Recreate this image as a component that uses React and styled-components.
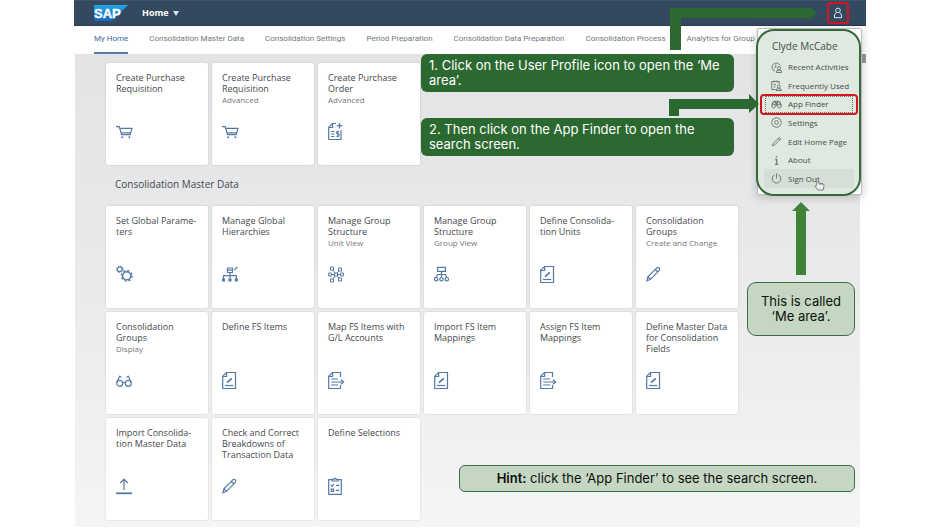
import React from "react";
import styled, { createGlobalStyle } from "styled-components";

const GlobalStyle = createGlobalStyle`
  * { box-sizing: border-box; }
  body { margin: 0; background: #fff; font-family: "Open Sans", "Noto Sans", sans-serif; color: #45494d; }
  button { font: inherit; color: inherit; border: 0; background: none; padding: 0; cursor: pointer; }
  a { color: inherit; text-decoration: none; }
`;

const Frame = styled.div`
  position: relative;
  margin: 0 74px;
`;

const Header = styled.header`
  display: flex;
  align-items: center;
  gap: 14px;
  height: 26px;
  padding: 0 17px 0 20px;
  background: #34495f;
  border-top: 1px solid #3d5670;
  border-bottom: 1px solid #2a3a4c;
`;

const HomeButton = styled.button`
  display: flex;
  align-items: center;
  gap: 4px;
  margin-right: auto;
  font-size: 9px;
  line-height: 12px;
  font-weight: 700;
  color: #fff;
`;

const UserButton = styled.button`
  display: grid;
  place-items: center;
  width: 22px;
  height: 22px;
  border: 2px solid #d3161f;
  border-radius: 4px;
  color: #dce8f4;
`;

const TabBar = styled.nav`
  display: flex;
  gap: 21px;
  height: 28px;
  padding: 0 20px;
  overflow: hidden;
  white-space: nowrap;
  background: #fff;
`;

const Tab = styled.a`
  display: flex;
  align-items: center;
  font-family: Roboto, "Open Sans", sans-serif;
  font-size: 8px;
  line-height: 12px;
  color: ${(p) => (p.$active ? "#3a6a9c" : "#74777a")};
  border-bottom: 2px solid ${(p) => (p.$active ? "#5580ad" : "transparent")};
`;

const Workspace = styled.main`
  margin: 0 6px 0 1px;
  padding: 9px 31px 7px;
  background: linear-gradient(#e2e4e5, #e7e8ea 36%, #eceef0 68%, #f4f5f6);
`;

const Tiles = styled.div`
  display: grid;
  grid-template-columns: repeat(auto-fill, 102px);
  gap: 4px;
`;

const Tile = styled.a`
  display: flex;
  flex-direction: column;
  justify-content: space-between;
  height: 102px;
  padding: 9px 4px 25px 10px;
  background: #fff;
  border-radius: 2px;
  box-shadow: 0 0 2px rgba(0, 0, 0, 0.18);
`;

const TileTitle = styled.h3`
  margin: 0;
  font-size: 9px;
  line-height: 11px;
  font-weight: 400;
  white-space: pre-line;
`;

const TileNote = styled.p`
  margin: 0;
  font-size: 8px;
  line-height: 11px;
  color: #74777a;
`;

const TileIcon = styled.svg`
  display: block;
  flex: none;
  width: 18px;
  height: 18px;
  fill: none;
  stroke: #5579a5;
  stroke-width: 1.2;
`;

const SectionTitle = styled.h2`
  margin: 0;
  padding: 11px 9px 14px;
  font-size: 10px;
  line-height: 16px;
  font-weight: 400;
`;

const ScrollThumb = styled.div`
  position: absolute;
  top: 54px;
  right: 0;
  width: 6px;
  height: 9px;
  background: #96989a;
`;

const Popover = styled.section`
  position: absolute;
  top: 28px;
  right: 4px;
  width: 105px;
  padding: 10px 7px 6px 6px;
  background: #fff;
  border: 1px solid #b9bdc0;
  border-radius: 2px;
  box-shadow: 0 2px 10px rgba(0, 0, 0, 0.22);
`;

const UserName = styled.h2`
  margin: 0 0 5px 8px;
  font-size: 10px;
  line-height: 14px;
  font-weight: 400;
`;

const Menu = styled.div`
  display: grid;
  grid-auto-rows: 1fr;
  height: 130px;
`;

const MenuItem = styled.button`
  display: flex;
  align-items: center;
  gap: 6px;
  padding-left: 7px;
  font-size: 8px;
  line-height: 12px;
  white-space: nowrap;
  background: ${(p) => (p.$hovered ? "#f3f4f4" : "transparent")};
  outline: ${(p) => (p.$focused ? "1px dotted #777" : "none")};
  outline-offset: -2px;
`;

const MenuIcon = styled.svg`
  width: 11px;
  height: 11px;
  fill: none;
  stroke: #7b8083;
  stroke-width: 1;
`;

const MeAreaRing = styled.div`
  position: absolute;
  top: 29px;
  right: 5px;
  width: 105px;
  height: 167px;
  border: 2px solid #35683a;
  border-radius: 18px;
  background: rgba(44, 106, 48, 0.15);
  pointer-events: none;
`;

const FinderRing = styled.div`
  position: absolute;
  top: 94px;
  right: 8px;
  width: 98px;
  height: 21px;
  border: 2px solid #d3161f;
  border-radius: 4px;
  pointer-events: none;
`;

const Callout = styled.p`
  position: absolute;
  top: ${(p) => p.$top}px;
  right: 132px;
  width: 313px;
  margin: 0;
  padding: 4px 8px;
  border-radius: 6px;
  background: #2c6930;
  color: #fff;
  font-family: Inter, sans-serif;
  font-size: 13px;
  line-height: 15px;
`;

const Note = styled.p`
  position: absolute;
  top: ${(p) => p.$top}px;
  right: 11px;
  width: ${(p) => p.$width}px;
  margin: 0;
  padding: ${(p) => p.$pad}px 8px;
  border: 1px solid #3f6c48;
  border-radius: ${(p) => p.$radius}px;
  background: #c5d7c3;
  color: #0c0f0c;
  text-align: center;
  font-family: Inter, sans-serif;
  font-size: 13px;
  line-height: 15px;

  strong { font-weight: 600; }
`;

const Arrow = styled.svg`
  position: absolute;
  top: ${(p) => p.$top}px;
  right: ${(p) => p.$right}px;
  fill: ${(p) => p.$color || "#2c6930"};
`;

const Pointer = styled.svg`
  position: absolute;
  top: 178px;
  right: 41px;
  fill: #edf1ed;
  stroke: #7b8083;
`;

const SheetOutline = () => <path d="M4.5 1.5H13.5V17.5H.7V5.3ZM.7 5.5H4.6V1.5" />;

const drawings = {
  cart: (
    <>
      <path d="M0 4.7H3.2L5.6 12.7H14.2L16 6.3H3.8M4.8 10.8H14.6" />
      <circle cx="6.2" cy="15.2" r="1" fill="#5579a5" stroke="none" />
      <circle cx="13.4" cy="15.2" r="1" fill="#5579a5" stroke="none" />
    </>
  ),
  order: (
    <>
      <path d="M8 1.5H4.5L.7 5.3V17.5H13V8M.7 5.5H4.6V1.5M11.5 1V6.5M8.8 3.7H14.4" />
      <path d="M3 9.5H6.5M3 12H6.5M3 14.5H6.5M11 9.6H8.6V11.8H11V14.3H8.4M9.8 8.6V15.4" strokeWidth="1" />
    </>
  ),
  gears: (
    <>
      <circle cx="3.8" cy="4.3" r="2.4" />
      <circle cx="3.8" cy="4.3" r="3.3" strokeWidth="1" strokeDasharray="1.2 1.4" />
      <circle cx="10.7" cy="10.8" r="4.1" strokeWidth="1.4" />
      <circle cx="10.7" cy="10.8" r="5.3" strokeWidth="1.5" strokeDasharray="2 2.16" />
    </>
  ),
  hierarchyEdit: (
    <>
      <path d="M5.5 3H10.5V7.5H5.5ZM5.5 5.2H10.5M8 7.5V14M1.5 14V10.7H14.3V14M12.2 5.2L15.4 2" />
      <path d="M0 13.4H3V16.5H0ZM6.5 13.4H9.5V16.5H6.5ZM12.8 13.4H15.8V16.5H12.8Z" fill="#5579a5" stroke="none" />
    </>
  ),
  network: (
    <path
      d="M2.5 2H5.5V5H2.5ZM10.5 3H13.5V6H10.5ZM.7 8H3.3V11H.7ZM6.5 8H9.5V11H6.5ZM12.7 8H15.4V11H12.7ZM2.5 14H5.5V17H2.5ZM10.5 13H13.5V16H10.5ZM3.3 9.5H6.5M9.5 9.5H12.7M5 5L7 8M11 6L9 8M5 14L7 11M11 13L9 11"
      strokeWidth="1"
    />
  ),
  hierarchy: (
    <>
      <path d="M3.6 2.3H11.4V6.3H3.6ZM7.5 6.3V12M2.3 12.5L3.5 9.5H11.5L12.7 12.5" />
      <circle cx="2.2" cy="14.2" r="1.7" />
      <circle cx="7.5" cy="14.2" r="1.7" />
      <circle cx="12.8" cy="14.2" r="1.7" />
    </>
  ),
  sheet: (
    <>
      <SheetOutline />
      <path d="M3 14.5H11.3" />
      <path d="M5 11.6L9.8 7.4" strokeWidth="1.7" />
    </>
  ),
  pencil: <path d="M.9 15.8L1.9 11.8L11 2.7Q12.3 1.9 13.3 2.9Q14.2 4 13.4 5.3L4.5 14.3ZM9.3 4.5L11.8 7M1.9 11.8L4.5 14.3" />,
  sheetExport: (
    <>
      <path d="M12.5 6V1.5H4.5L.7 5.3V17.5H12.5V14M.7 5.5H4.6V1.5" />
      <path d="M3.2 8H10M3.2 11H14.5M3.2 14H10M13 8.7L15.6 11L13 13.3" />
    </>
  ),
  glasses: (
    <>
      <circle cx="3.7" cy="12.3" r="3" />
      <circle cx="12.3" cy="12.3" r="3" />
      <path d="M6.7 12Q8 10.5 9.3 12M.8 11.5L3.6 5.2L5.6 6.2M15.2 11.5L12.4 5.2L10.4 6.2" />
    </>
  ),
  upload: (
    <>
      <path d="M8 13V2.5M4.2 6L8 2.2L11.8 6" />
      <path d="M0 16.3H16" strokeWidth="1.8" />
    </>
  ),
  checklist: (
    <>
      <path d="M3.5 2.7H.7V17.4H13.3V2.7H10.5M4 4V2.4H5.8L7 1.2L8.2 2.4H10V4Z" />
      <path d="M2.9 8L4.2 9.3L6 7M8 8.3H11.3M3.2 12.2H5.6V14.4H3.2ZM8 13.3H11.3" />
    </>
  ),
};

const favourites = [
  { title: "Create Purchase\nRequisition", icon: "cart" },
  { title: "Create Purchase\nRequisition", note: "Advanced", icon: "cart" },
  { title: "Create Purchase\nOrder", note: "Advanced", icon: "order" },
];

const masterData = [
  { title: "Set Global Parame-\nters", icon: "gears" },
  { title: "Manage Global\nHierarchies", icon: "hierarchyEdit" },
  { title: "Manage Group\nStructure", note: "Unit View", icon: "network" },
  { title: "Manage Group\nStructure", note: "Group View", icon: "hierarchy" },
  { title: "Define Consolida-\ntion Units", icon: "sheet" },
  { title: "Consolidation\nGroups", note: "Create and Change", icon: "pencil" },
  { title: "Consolidation\nGroups", note: "Display", icon: "glasses" },
  { title: "Define FS Items", icon: "sheet" },
  { title: "Map FS Items with\nG/L Accounts", icon: "sheetExport" },
  { title: "Import FS Item\nMappings", icon: "sheet" },
  { title: "Assign FS Item\nMappings", icon: "sheetExport" },
  { title: "Define Master Data\nfor Consolidation\nFields", icon: "sheet" },
  { title: "Import Consolida-\ntion Master Data", icon: "upload" },
  { title: "Check and Correct\nBreakdowns of\nTransaction Data", icon: "pencil" },
  { title: "Define Selections", icon: "checklist" },
];

const tabs = [
  "My Home",
  "Consolidation Master Data",
  "Consolidation Settings",
  "Period Preparation",
  "Consolidation Data Preparation",
  "Consolidation Process",
  "Analytics for Group",
];

const menuItems = [
  {
    label: "Recent Activities",
    icon: (
      <>
        <path d="M9 3.3A4.2 4.2 0 1 0 4 9.2M4.8 2.5V5L3.2 6.2M5.2 10.5Q5.2 8 8 8T10.8 10.5Z" />
        <circle cx="8" cy="6.2" r="1.6" />
      </>
    ),
  },
  {
    label: "Frequently Used",
    icon: (
      <>
        <path d="M4.5 9.5H.7V1.5H8.3V4M3 .5V2.5M6 .5V2.5M2.5 4.5H5M2.5 6.8H4.5M5 10.5Q5 8.5 7.8 8.5T10.6 10.5Z" />
        <circle cx="7.8" cy="6.4" r="1.5" />
      </>
    ),
  },
  {
    label: "App Finder",
    focused: true,
    icon: (
      <>
        <path d="M2.2 3L4.6 2.3L5.1 7M8.8 3L6.4 2.3L5.9 7M2.2 3L.9 6.6M8.8 3L10.1 6.6M4.8 5H6.2" strokeWidth="1.4" />
        <circle cx="2.6" cy="7.2" r="1.8" />
        <circle cx="8.4" cy="7.2" r="1.8" />
      </>
    ),
  },
  {
    label: "Settings",
    icon: (
      <>
        <path d="M5.5.6L7.1 1.1L8.9 2L9.8 3.8L10.4 5.5L9.8 7.2L8.9 9L7.1 9.9L5.5 10.4L3.9 9.9L2.1 9L1.2 7.2L.6 5.5L1.2 3.8L2.1 2L3.9 1.1Z" />
        <circle cx="5.5" cy="5.5" r="1.9" />
      </>
    ),
  },
  { label: "Edit Home Page", icon: <path d="M1.3 9.8L2 7.6L8.4 1.4L9.8 2.8L3.5 9.1ZM7.2 2.5L8.6 4" /> },
  { label: "About", icon: <path d="M5.5 1V2.6M4.3 4.5H5.6V9.3M4 9.4H7.2" strokeWidth="1.4" /> },
  { label: "Sign Out", hovered: true, icon: <path d="M3.4 2A4.3 4.3 0 1 0 7.6 2M5.5 .4V5.5" /> },
];

const TileGroup = ({ items }) => (
  <Tiles>
    {items.map((t, i) => (
      <Tile href="#" key={i}>
        <div>
          <TileTitle>{t.title}</TileTitle>
          {t.note && <TileNote>{t.note}</TileNote>}
        </div>
        <TileIcon viewBox="0 0 18 18" aria-hidden="true">{drawings[t.icon]}</TileIcon>
      </Tile>
    ))}
  </Tiles>
);

const SapLogo = () => (
  <svg width="34" height="16" viewBox="0 0 34 16" role="img" aria-label="SAP">
    <defs>
      <linearGradient id="sap" x1="0" y1="0" x2="0" y2="1">
        <stop offset="0" stopColor="#22a7e8" />
        <stop offset="1" stopColor="#1268bd" />
      </linearGradient>
    </defs>
    <path d="M0 0H34L18 16H0Z" fill="url(#sap)" />
    <text x="0" y="13" fontFamily="Liberation Sans, sans-serif" fontSize="13" fontWeight="700" fill="#fff" stroke="#fff" strokeWidth=".4">
      SAP
    </text>
  </svg>
);

export default function App() {
  return (
    <>
      <GlobalStyle />
      <Frame>
        <Header>
          <SapLogo />
          <HomeButton>
            Home
            <svg width="6" height="5" viewBox="0 0 6 5" aria-hidden="true">
              <path d="M0 0H6L3 5Z" fill="#d5e3f0" />
            </svg>
          </HomeButton>
          <UserButton aria-label="User profile">
            <svg width="10" height="12" viewBox="0 0 10 12" fill="none" stroke="currentColor" aria-hidden="true">
              <circle cx="5" cy="3.4" r="2.3" />
              <path d="M3.4 5.5L1.5 7.8V10.7H8.5V7.8L6.6 5.5" />
            </svg>
          </UserButton>
        </Header>
        <TabBar>
          {tabs.map((t, i) => (
            <Tab href="#" key={t} $active={i === 0}>{t}</Tab>
          ))}
        </TabBar>
        <Workspace>
          <TileGroup items={favourites} />
          <SectionTitle>Consolidation Master Data</SectionTitle>
          <TileGroup items={masterData} />
        </Workspace>

        <ScrollThumb />
        <Popover>
          <UserName>Clyde McCabe</UserName>
          <Menu>
            {menuItems.map((m) => (
              <MenuItem key={m.label} $focused={m.focused} $hovered={m.hovered}>
                <MenuIcon viewBox="0 0 11 11" aria-hidden="true">{m.icon}</MenuIcon>
                {m.label}
              </MenuItem>
            ))}
          </Menu>
        </Popover>
        <MeAreaRing />
        <FinderRing />
        <Pointer width="11" height="13" viewBox="0 0 11 13" aria-hidden="true">
          <path d="M2.7 7.7V1.4Q3.5 .2 4.3 1.4V5L9 5.8Q10.2 6.2 10 7.5L9.2 12H4L1 8.2Q1 7 2.7 7.7ZM6 5.4V7M8 5.7V7" />
        </Pointer>

        <Callout $top={54}>1. Click on the User Profile icon to open the ‘Me area’.</Callout>
        <Callout $top={118}>2. Then click on the App Finder to open the search screen.</Callout>
        <Note $top={282} $width={108} $pad={11} $radius={9}>This is called ‘Me area’.</Note>
        <Note $top={465} $width={396} $pad={5} $radius={6}>
          <strong>Hint:</strong> click the ‘App Finder’ to see the search screen.
        </Note>

        <Arrow $top={6} $right={49} width="147" height="44" viewBox="0 0 147 44" aria-hidden="true">
          <path d="M0 44V2H138V0L147 7L138 14V12H11V44Z" />
        </Arrow>
        <Arrow $top={94} $right={107} width="90" height="22" viewBox="0 0 90 22" aria-hidden="true">
          <path d="M0 22V5H80V0L90 10L80 19V15H10V22Z" />
        </Arrow>
        <Arrow $top={202} $right={56} $color="#408236" width="18" height="73" viewBox="0 0 18 73" aria-hidden="true">
          <path d="M9 0L18 9H14V73H4V9H0Z" />
        </Arrow>
      </Frame>
    </>
  );
}
